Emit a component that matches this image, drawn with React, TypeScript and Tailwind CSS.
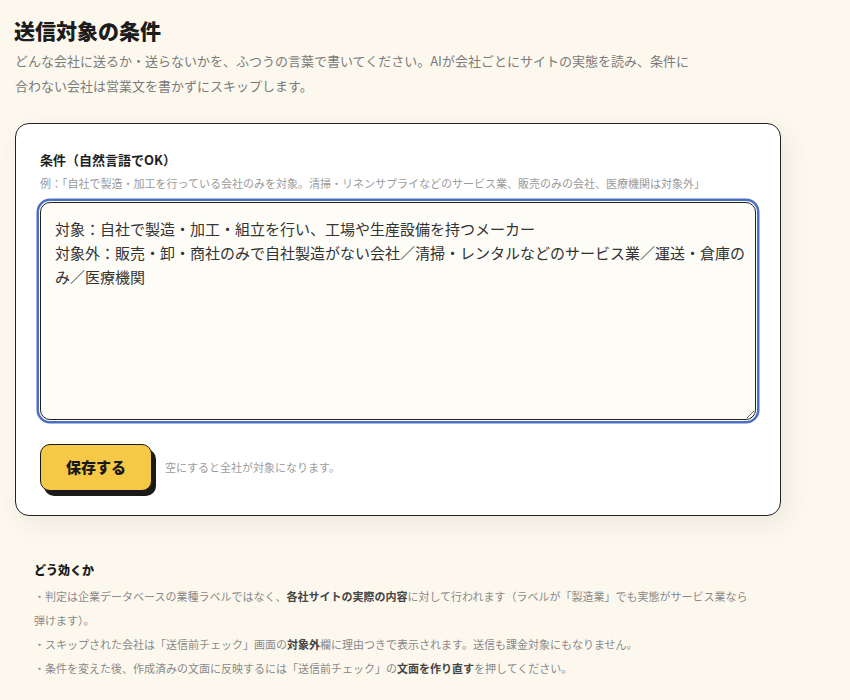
import React, { useState } from 'react';

const DEFAULT_CONDITION =
  '対象：自社で製造・加工・組立を行い、工場や生産設備を持つメーカー\n対象外：販売・卸・商社のみで自社製造がない会社／清掃・レンタルなどのサービス業／運送・倉庫のみ／医療機関';

const App: React.FC = () => {
  const [condition, setCondition] = useState(DEFAULT_CONDITION);

  return (
    <div className="min-h-screen bg-[#fcf8ee] px-[15px] pt-[15px] pb-10 font-['Noto_Sans_CJK_JP','Noto_Sans',sans-serif]">
      <div className="w-[766px]">
        <h1 className="text-[21px] font-black leading-[30px] text-[#1c1c1c] -ml-px">送信対象の条件</h1>
        <p className="mt-[3px] max-w-[682px] text-[13px] leading-[25px] text-[#7b7b7b]">
          どんな会社に送るか・送らないかを、ふつうの言葉で書いてください。AIが会社ごとにサイトの実態を読み、条件に合わない会社は営業文を書かずにスキップします。
        </p>

        <div className="mt-[25px] rounded-[14px] border-[1.5px] border-[#222] bg-white px-[24px] pt-[26px] pb-[24px] shadow-[6px_8px_24px_rgba(60,50,20,0.08)]">
          <label className="block text-[13px] font-bold leading-[20px] text-[#1f1f1f]">条件（自然言語でOK）</label>
          <p className="mt-[5px] text-[11px] leading-[16px] text-[#9a9a9a]">
            例：「自社で製造・加工を行っている会社のみを対象。清掃・リネンサプライなどのサービス業、販売のみの会社、医療機関は対象外」
          </p>
          <textarea
            value={condition}
            onChange={(e) => setCondition(e.target.value)}
            className="mt-[11px] block h-[218px] w-full rounded-[10px] border-[1.5px] border-[#222] bg-[#fdfcf7] pl-[14px] pr-[8px] pt-[14px] text-[15px] leading-[24px] text-[#333] outline-none shadow-[0_0_0_1px_#fff,0_0_0_3.5px_#4a6fc4]"
          />
          <div className="mt-[24px] flex items-center gap-[13px]">
            <button className="h-[47px] w-[112px] rounded-[10px] border-[1.5px] border-[#1a1a1a] bg-[#f5c945] text-[15px] font-black text-[#1a1a1a] shadow-[4px_5px_0_#1a1a1a]">
              保存する
            </button>
            <span className="text-[11px] text-[#9b9b9b]">空にすると全社が対象になります。</span>
          </div>
        </div>

        <div className="mt-[45px] pl-[19px] pr-[25px]">
          <h3 className="text-[12px] font-black leading-[18px] text-[#1a1a1a]">どう効くか</h3>
          <div className="mt-[5px] text-[11px] leading-[24px] text-[#8a8a8a]">
            <p>
              ・判定は企業データベースの業種ラベルではなく、<b className="font-bold text-[#444]">各社サイトの実際の内容</b>に対して行われます（ラベルが「製造業」でも実態がサービス業なら弾けます）。
            </p>
            <p>
              ・スキップされた会社は「送信前チェック」画面の<b className="font-bold text-[#444]">対象外</b>欄に理由つきで表示されます。送信も課金対象にもなりません。
            </p>
            <p>
              ・条件を変えた後、作成済みの文面に反映するには「送信前チェック」の<b className="font-bold text-[#444]">文面を作り直す</b>を押してください。
            </p>
          </div>
        </div>
      </div>
    </div>
  );
};

export default App;
